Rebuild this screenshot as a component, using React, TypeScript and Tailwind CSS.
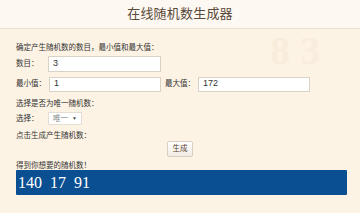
import React from "react";

const cjk = { fontFamily: '"Liberation Sans", "Noto Sans CJK SC", sans-serif' };

function Label({ children, w }: { children: React.ReactNode; w?: string }) {
  return <span className={`text-[7.5px] text-[#333] ${w ?? ""}`}>{children}</span>;
}

export default function App() {
  return (
    <div className="w-[360px] h-[213px] overflow-hidden bg-[#fdf3e4] flex flex-col" style={cjk}>
      <div className="h-[29px] shrink-0 bg-[#fdf9f2] border-b border-[#eadfcd] flex items-center justify-center">
        <span className="text-[13px] text-[#5a4838] tracking-[0.2px]">在线随机数生成器</span>
      </div>

      <div className="relative flex-1 flex flex-col pl-[16px] pr-[13px]">
        {/* faint watermark digits */}
        <div className="absolute right-[40px] top-[2px] text-[40px] leading-none text-[#f8eddd] font-bold select-none pointer-events-none" style={{ fontFamily: '"Liberation Serif", serif' }}>
          8 3
        </div>

        <div className="relative mt-[11px] h-[10px] leading-[10px]">
          <Label>确定产生随机数的数目，最小值和最大值：</Label>
        </div>

        <div className="relative mt-[6px] h-[16px] flex items-center">
          <Label w="w-[32px]">数目：</Label>
          <div className="w-[113px] h-[16px] bg-white border border-[#d9d2c6] flex items-center pl-[4px] text-[9px] text-[#333]">3</div>
        </div>

        <div className="relative mt-[4px] h-[16px] flex items-center">
          <Label w="w-[33px]">最小值：</Label>
          <div className="w-[112px] h-[15px] bg-white border border-[#d9d2c6] flex items-center pl-[4px] text-[9px] text-[#333]">1</div>
          <Label w="w-[33px] ml-[4px]">最大值：</Label>
          <div className="w-[112px] h-[15px] bg-white border border-[#d9d2c6] flex items-center pl-[4px] text-[9px] text-[#333]">172</div>
        </div>

        <div className="relative mt-[4px] h-[10px] leading-[10px]">
          <Label>选择是否为唯一随机数：</Label>
        </div>

        <div className="relative mt-[6px] h-[13px] flex items-center">
          <Label w="w-[32px]">选择：</Label>
          <div className="w-[34px] h-[13px] bg-white border border-[#e4ddd2] flex items-center pl-[4px] gap-[4px] text-[7.5px] text-[#888]">
            唯一 <span className="text-[5px] text-[#555]">▼</span>
          </div>
        </div>

        <div className="relative mt-[3px] h-[10px] leading-[10px]">
          <Label>点击生成产生随机数：</Label>
        </div>

        <div className="relative mt-[3px] h-[16px] flex justify-center pr-[3px]">
          <div className="w-[26px] h-[16px] border border-[#d6cfc4] rounded-[2px] bg-gradient-to-b from-white to-[#f1ece4] flex items-center justify-center text-[7.5px] text-[#5a3f2b]">
            生成
          </div>
        </div>

        <div className="relative mt-[1px] h-[10px] leading-[10px]">
          <Label>得到你想要的随机数！</Label>
        </div>

        <div className="relative mt-[2px] h-[25px] bg-[#0a4f92] rounded-[1px] flex items-center pl-[2px]">
          <span className="text-white text-[16px] whitespace-pre" style={{ fontFamily: '"Liberation Serif", serif' }}>
            140  17  91
          </span>
        </div>
      </div>
    </div>
  );
}
